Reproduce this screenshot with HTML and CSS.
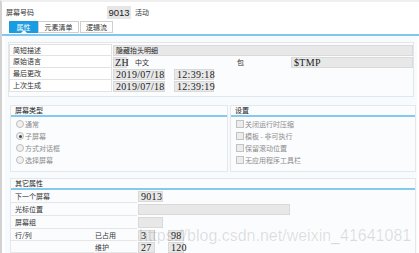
FILE: index.html
```html
<!DOCTYPE html>
<html lang="zh-CN">
<head>
  <meta charset="utf-8">
  <title>屏幕属性</title>
  <link rel="stylesheet" href="styles.css">
</head>
<body>
<div class="page">

  <!-- screen number + status -->
  <div class="top">
    <span class="toplabel">屏幕号码</span>
    <span class="topfield">9013</span>
    <span class="state">活动</span>
  </div>

  <div class="tabs">
    <span class="tab on">属性</span>
    <span class="tab w41">元素清单</span>
    <span class="tab w33">逻辑流</span>
  </div>
  <div class="rule"></div>

  <div class="panel">

    <div class="hdr">
      <div class="row">
        <span class="lab">简短描述</span>
        <span class="fld cjk grow">隐藏抬头明细</span>
      </div>
      <div class="row">
        <span class="lab">原始语言</span>
        <span class="fld w14">ZH</span>
        <span class="txt lang">中文</span>
        <span class="txt pkg">包</span>
        <span class="fld grow">$TMP</span>
      </div>
      <div class="row">
        <span class="lab">最后更改</span>
        <span class="fld date">2019/07/18</span>
        <span class="fld time">12:39:18</span>
      </div>
      <div class="row">
        <span class="lab">上次生成</span>
        <span class="fld date">2019/07/18</span>
        <span class="fld time">12:39:19</span>
      </div>
    </div>

    <div class="pair">
      <div class="group types">
        <div class="title">屏幕类型</div>
        <div class="list">
          <div class="opt"><span class="radio"></span>通常</div>
          <div class="opt"><span class="radio checked"></span>子屏幕</div>
          <div class="opt"><span class="radio"></span>方式对话框</div>
          <div class="opt"><span class="radio"></span>选择屏幕</div>
        </div>
      </div>
      <div class="group opts">
        <div class="title">设置</div>
        <div class="list">
          <div class="opt"><span class="check"></span>关闭运行时压缩</div>
          <div class="opt"><span class="check"></span>模板 - 非可执行</div>
          <div class="opt"><span class="check"></span>保留滚动位置</div>
          <div class="opt"><span class="check"></span>无应用程序工具栏</div>
        </div>
      </div>
    </div>

    <div class="group other">
      <div class="title">其它属性</div>
      <div class="orow">
        <span class="olab">下一个屏幕</span>
        <span class="fld w25">9013</span>
      </div>
      <div class="orow">
        <span class="olab">光标位置</span>
        <span class="fld w152"></span>
      </div>
      <div class="orow">
        <span class="olab">屏幕组</span>
        <span class="fld w25"></span>
      </div>
      <div class="orow short">
        <span class="olab narrow">行/列</span>
        <span class="olab sub">已占用</span>
        <span class="fld w17">3</span>
        <span class="fld w16 gap">98</span>
      </div>
      <div class="orow short">
        <span class="olab narrow"></span>
        <span class="olab sub">维护</span>
        <span class="fld w17">27</span>
        <span class="fld w16 gap">120</span>
      </div>
    </div>

  </div>

  <!-- watermark over the bottom rows -->
  <div class="mark">https://blog.csdn.net/weixin_41641081</div>
</div>
</body>
</html>
```

FILE: styles.css
```css
body{
  margin: 0;
  font-family: "Noto Sans CJK SC", sans-serif;
  font-size: 7px;
  color: #333;
  background-color: #fff;
}

.page{
  position: relative;
  width: 419px;
  height: 253px;
  overflow: hidden;
  box-sizing: border-box;
  border-top: 2px solid #efefef;
  border-left: 2px solid #d2d2d2;
}

/* header line ================================================ */

.top{
  display: flex;
  align-items: center;
  height: 13px;
  margin-top: 4px;
  padding-left: 4px;
}

.toplabel{
  width: 101px;
  line-height: 9px;
}

.topfield{
  width: 24px;
  height: 13px;
  background-color: #e6e6e6;
  font-family: "Liberation Sans", sans-serif;
  font-size: 9.5px;
  line-height: 13px;
  text-align: center;
  color: #222;
}

.state{
  margin-left: 4px;
  line-height: 9px;
}

.tabs{
  display: flex;
  height: 12px;
  margin: 2px 0 0 7px;
}

.tab{
  position: relative;
  box-sizing: border-box;
  width: 29px;
  height: 12px;
  border: 1px solid #cfcfcf;
  background-color: #fff;
  line-height: 10px;
  text-align: center;
  color: #333;
}

.tab.on{
  background-color: #1c9ce0;
  border-color: #1c9ce0;
  color: #fff;
}

.tab.on::after{
  content: "";
  position: absolute;
  left: 11px;
  bottom: -1px;
  border: 3px solid transparent;
  border-bottom-color: #fff;
  border-top: 0;
}

.w41{ width: 41px; }
.w33{ width: 33px; margin-left: 1px; }

.rule{
  height: 2px;
  margin-top: 1px;
  background-color: #80c6ee;
}

/* main panel ================================================= */

.panel{
  height: 217px;
  margin: 0 2px 0 3px;
  padding: 6px 1px 0 3px;
  background-color: #f8fbfd;
}

.hdr{
  margin-right: 2px;
  padding: 1px 0 4px 0;
  border: 1px solid #e3e7ea;
  background-color: #fbfcfd;
}

.row{
  display: flex;
  align-items: center;
  height: 12px;
}

.lab{
  box-sizing: border-box;
  width: 103px;
  height: 12px;
  padding-left: 3px;
  border: 1px solid #e2e2e2;
  border-top: 0;
  background-color: #fff;
  line-height: 11px;
}

.row:first-child .lab{
  border-top: 1px solid #e2e2e2;
}

.fld{
  box-sizing: border-box;
  height: 11px;
  margin-left: 1px;
  padding: 0 2px;
  border: 1px solid #d9d9d9;
  background-color: #e8e8e8;
  font-family: "Liberation Serif", serif;
  font-size: 10px;
  letter-spacing: 0.3px;
  line-height: 9px;
  color: #222;
  white-space: nowrap;
}

.fld.cjk{
  font-family: "Noto Sans CJK SC", sans-serif;
  font-size: 7px;
  letter-spacing: 0;
}

.grow{ flex: 1; }

.txt{ line-height: 9px; }
.lang{ width: 102px; margin-left: 8px; }
.pkg{ width: 53px; }

.w14{ width: 14px; padding: 0 1px; }
.date{ width: 52px; }
.time{ width: 40px; margin-left: 9px; }

/* groups ===================================================== */

.pair{
  display: flex;
  gap: 2px;
  margin-top: 8px;
  padding-left: 2px;
}

.group{
  box-sizing: border-box;
  border: 1px solid #e4e8eb;
  background-color: #fbfcfe;
}

.types{ width: 218px; }
.opts{ flex: 1; }

.title{
  height: 9px;
  padding-left: 4px;
  border-bottom: 2px solid #85c9ee;
  line-height: 9px;
  color: #222;
}

.list{
  padding: 1px 0 5px 0;
}

.opt{
  display: flex;
  align-items: center;
  height: 12px;
  padding-left: 5px;
  color: #8c8c8c;
}

.radio{
  box-sizing: border-box;
  width: 8px;
  height: 8px;
  margin-right: 1px;
  border: 1px solid #bdbdbd;
  border-radius: 50%;
  background-color: #f1f1f1;
  display: flex;
  align-items: center;
  justify-content: center;
}

.radio.checked::after{
  content: "";
  width: 3px;
  height: 3px;
  border-radius: 50%;
  background-color: #444;
}

.check{
  box-sizing: border-box;
  width: 8px;
  height: 8px;
  margin-right: 1px;
  border: 1px solid #c2c2c2;
  background-color: #ececec;
}

.other{
  height: 80px;
  margin: 6px 0 0 2px;
}

.orow{
  display: flex;
  align-items: center;
  height: 13px;
}

.orow.short{ height: 12px; }

.olab{
  box-sizing: border-box;
  width: 126px;
  height: 100%;
  padding-left: 4px;
  border-bottom: 1px solid #e6e6e6;
  line-height: 12px;
}

.olab.narrow{ width: 84px; }
.olab.sub{ width: 42px; padding-left: 0; }

.w25{ width: 25px; }
.w152{ width: 152px; }
.w17{ width: 17px; }
.w16{ width: 16px; }
.gap{ margin-left: 13px; }

/* watermark ================================================== */

.mark{
  position: absolute;
  left: 137px;
  top: 226px;
  font-family: "Liberation Sans", sans-serif;
  font-size: 16px;
  line-height: 16px;
  color: rgba(0, 0, 0, 0.13);
  white-space: nowrap;
}
```
